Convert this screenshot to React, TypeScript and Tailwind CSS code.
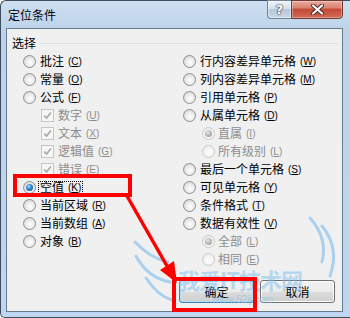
import React from 'react';

type Item = {
  label: string;
  k: string;
  kind: 'radio' | 'check';
  checked?: boolean;
  disabled?: boolean;
  sub?: 'check' | 'radio';
  focus?: boolean;
};

function Radio({ checked, disabled }: { checked?: boolean; disabled?: boolean }) {
  return (
    <span
      className={
        disabled
          ? 'w-[13px] h-[13px] rounded-full border border-[#cacaca] bg-[radial-gradient(circle_at_55%_60%,#ffffff_0%,#f2f2f2_55%,#e2e2e2_100%)] flex items-center justify-center shrink-0'
          : 'w-[13px] h-[13px] rounded-full border border-[#8e8f8f] bg-[radial-gradient(circle_at_55%_60%,#ffffff_0%,#ececec_45%,#c6c6c6_100%)] flex items-center justify-center shrink-0'
      }
    >
      {checked && (
        <span
          className={
            disabled
              ? 'w-[7px] h-[7px] rounded-full bg-[radial-gradient(circle_at_40%_35%,#e6e6e6_0%,#adadad_60%,#8f8f8f_100%)]'
              : 'w-[7px] h-[7px] rounded-full bg-[radial-gradient(circle_at_40%_35%,#a6dcff_0%,#2b86d8_45%,#0b3a76_100%)]'
          }
        />
      )}
    </span>
  );
}

function Check() {
  return (
    <span className="w-[13px] h-[13px] border border-[#c6c6c6] bg-[#f6f6f6] flex items-center justify-center shrink-0">
      <svg width="9" height="9" viewBox="0 0 9 9">
        <path d="M1.2 4.6 L3.6 7 L7.9 1.6" stroke="#a9a9a9" strokeWidth="1.6" fill="none" />
      </svg>
    </span>
  );
}

function Label({ item }: { item: Item }) {
  const inner = (
    <>
      <span>{item.label}</span>
      <span className="font-['Liberation_Sans',sans-serif] text-[10px] ml-[4px]">
        (<span className="underline">{item.k}</span>)
      </span>
    </>
  );
  if (item.focus) {
    return (
      <span className="flex items-center border border-dotted border-black px-[1px] h-[13px] -ml-[2px]">
        {inner}
      </span>
    );
  }
  return <span className="flex items-center">{inner}</span>;
}

function Row({ item }: { item: Item }) {
  const color = item.disabled ? 'text-[#8d8d8d]' : 'text-black';
  if (item.kind === 'check') {
    return (
      <div className={`h-[18px] flex items-center pl-[18px] gap-[4px] text-[12px] ${color}`}>
        <Check />
        <Label item={item} />
      </div>
    );
  }
  if (item.sub === 'radio') {
    return (
      <div className={`h-[18px] flex items-center pl-[19px] gap-[3px] text-[12px] ${color}`}>
        <Radio checked={item.checked} disabled />
        <Label item={item} />
      </div>
    );
  }
  return (
    <div className={`h-[18px] flex items-center gap-[4px] text-[12px] ${color}`}>
      <Radio checked={item.checked} disabled={item.disabled} />
      <Label item={item} />
    </div>
  );
}

const left: Item[] = [
  { label: '批注', k: 'C', kind: 'radio' },
  { label: '常量', k: 'O', kind: 'radio' },
  { label: '公式', k: 'F', kind: 'radio' },
  { label: '数字', k: 'U', kind: 'check', disabled: true },
  { label: '文本', k: 'X', kind: 'check', disabled: true },
  { label: '逻辑值', k: 'G', kind: 'check', disabled: true },
  { label: '错误', k: 'E', kind: 'check', disabled: true },
  { label: '空值', k: 'K', kind: 'radio', checked: true, focus: true },
  { label: '当前区域', k: 'R', kind: 'radio' },
  { label: '当前数组', k: 'A', kind: 'radio' },
  { label: '对象', k: 'B', kind: 'radio' },
];

const right: Item[] = [
  { label: '行内容差异单元格', k: 'W', kind: 'radio' },
  { label: '列内容差异单元格', k: 'M', kind: 'radio' },
  { label: '引用单元格', k: 'P', kind: 'radio' },
  { label: '从属单元格', k: 'D', kind: 'radio' },
  { label: '直属', k: 'I', kind: 'radio', sub: 'radio', checked: true, disabled: true },
  { label: '所有级别', k: 'L', kind: 'radio', sub: 'radio', disabled: true },
  { label: '最后一个单元格', k: 'S', kind: 'radio' },
  { label: '可见单元格', k: 'Y', kind: 'radio' },
  { label: '条件格式', k: 'T', kind: 'radio' },
  { label: '数据有效性', k: 'V', kind: 'radio' },
  { label: '全部', k: 'L', kind: 'radio', sub: 'radio', checked: true, disabled: true },
  { label: '相同', k: 'E', kind: 'radio', sub: 'radio', disabled: true },
];

export default function App() {
  return (
    <div className="relative w-[350px] h-[318px] overflow-hidden font-['Noto_Sans_CJK_SC','Noto_Sans',sans-serif]">
      <div className="w-full h-full flex flex-col border-l border-t border-b border-[#3e4d5e] rounded-tl-[6px] rounded-bl-[5px] bg-[linear-gradient(180deg,#cfe0f1_0%,#bcd3ea_9%,#bed6ef_100%)]">
        {/* Title bar */}
        <div className="h-[27px] flex items-start pr-[7px] shrink-0">
          <div className="pl-[7px] pt-[7px] text-[12px] leading-[14px] text-black">定位条件</div>
          <div className="flex-1" />
          <div className="flex -mt-[1px]">
            <div className="w-[24px] h-[19px] rounded-bl-[4px] border border-[#6f8296] border-r-0 bg-[linear-gradient(180deg,#eef3f9_0%,#d6e1ec_45%,#b8c8da_50%,#c9d7e5_100%)] flex items-center justify-center shadow-[inset_0_0_0_1px_rgba(255,255,255,0.5)]">
              <span className="font-['DejaVu_Sans',sans-serif] text-[13px] font-bold leading-none text-white [text-shadow:0_0_1px_#2f3f52,0_0_1px_#2f3f52,0_0_2px_#2f3f52]">?</span>
            </div>
            <div className="w-[52px] h-[19px] rounded-br-[4px] border border-[#6d3a33] bg-[linear-gradient(180deg,#e9a99b_0%,#d98270_40%,#c24a36_50%,#d26a55_100%)] flex items-center justify-center shadow-[inset_0_0_0_1px_rgba(255,255,255,0.35)]">
              <svg width="13" height="11" viewBox="0 0 13 11">
                <path d="M2 1.5 L11 9.5 M11 1.5 L2 9.5" stroke="#4a2520" strokeWidth="4" strokeLinecap="round" />
                <path d="M2 1.5 L11 9.5 M11 1.5 L2 9.5" stroke="#ffffff" strokeWidth="2.2" strokeLinecap="round" />
              </svg>
            </div>
          </div>
        </div>
        {/* Content */}
        <div className="flex-1 ml-[5px] mr-[7px] mb-[5px] border border-[#687a8d] bg-[#f0f0f0] flex flex-col">
          <div className="mt-[8px] h-[12px] pl-[5px] pr-[4px] flex items-center text-[12px] text-black">
            <span>选择</span>
            <span className="flex-1 h-px bg-[#d5dfe5] ml-[3px]" />
          </div>
          <div className="mt-[3px] flex pl-[16px]">
            <div className="w-[160px] flex flex-col">
              {left.map((it, i) => (
                <Row key={i} item={it} />
              ))}
            </div>
            <div className="flex flex-col">
              {right.map((it, i) => (
                <Row key={i} item={it} />
              ))}
            </div>
          </div>
          <div className="mt-[12px] flex justify-end gap-[6px] pr-[7px]">
            <button className="w-[75px] h-[23px] rounded-[3px] border border-[#3c7fb1] bg-[linear-gradient(180deg,#f2f2f2_0%,#ebebeb_50%,#dddddd_50%,#cfcfcf_100%)] shadow-[inset_0_0_0_1px_#b7e0f5] text-[12px] text-black flex items-center justify-center">
              确定
            </button>
            <button className="w-[75px] h-[23px] rounded-[3px] border border-[#707070] bg-[linear-gradient(180deg,#f2f2f2_0%,#ebebeb_50%,#dddddd_50%,#cfcfcf_100%)] shadow-[inset_0_0_0_1px_#fcfcfc] text-[12px] text-black flex items-center justify-center">
              取消
            </button>
          </div>
        </div>
      </div>

      {/* Watermark */}
      <svg className="absolute left-0 top-0 pointer-events-none" width="350" height="318" viewBox="0 0 350 318">
        <g fill="none" stroke="#6fb6ec" strokeOpacity="0.55" strokeLinecap="round">
          <path d="M135 242 Q150 258 168 262" strokeWidth="3" />
          <path d="M136 256 Q148 278 170 282" strokeWidth="3" />
          <path d="M146 278 Q158 296 172 300" strokeWidth="3" />
          <path d="M310 218 Q328 238 322 262" strokeWidth="3" />
          <path d="M322 226 Q340 248 330 276" strokeWidth="3" />
        </g>
      </svg>
      <div className="absolute left-[178px] top-[266px] pointer-events-none text-[22px] leading-[26px] font-bold text-[#7bbcef]/50 tracking-[-1px]">
        我爱IT技术网
      </div>
      <div className="absolute left-[212px] top-[295px] pointer-events-none font-['Liberation_Sans',sans-serif] text-[10px] leading-[10px] text-[#86c0ee]/60">
        www.52ij.com
      </div>

      {/* Red annotations */}
      <div className="absolute left-[13px] top-[174px] w-[119px] h-[23px] border-4 border-[#ff0000] pointer-events-none" />
      <div className="absolute left-[172px] top-[277px] w-[85px] h-[35px] border-4 border-[#ff0000] pointer-events-none" />
      <svg className="absolute left-0 top-0 pointer-events-none" width="350" height="318" viewBox="0 0 350 318">
        <line x1="127" y1="196" x2="167" y2="266" stroke="#ff0000" strokeWidth="3.5" />
        <polygon points="177,283 160,270 174,261" fill="#ff0000" />
      </svg>
    </div>
  );
}
